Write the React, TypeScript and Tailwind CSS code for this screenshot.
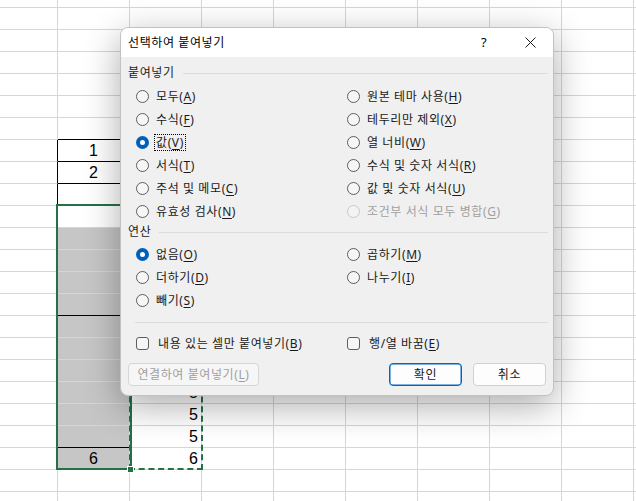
import React from 'react';

type Opt = { t: string; k?: string; checked?: boolean; disabled?: boolean; focused?: boolean };

const pasteLeft: Opt[] = [
  { t: '모두', k: 'A' },
  { t: '수식', k: 'F' },
  { t: '값', k: 'V', checked: true, focused: true },
  { t: '서식', k: 'T' },
  { t: '주석 및 메모', k: 'C' },
  { t: '유효성 검사', k: 'N' },
];

const pasteRight: Opt[] = [
  { t: '원본 테마 사용', k: 'H' },
  { t: '테두리만 제외', k: 'X' },
  { t: '열 너비', k: 'W' },
  { t: '수식 및 숫자 서식', k: 'R' },
  { t: '값 및 숫자 서식', k: 'U' },
  { t: '조건부 서식 모두 병합', k: 'G', disabled: true },
];

const opLeft: Opt[] = [
  { t: '없음', k: 'O', checked: true },
  { t: '더하기', k: 'D' },
  { t: '빼기', k: 'S' },
];

const opRight: Opt[] = [
  { t: '곱하기', k: 'M' },
  { t: '나누기', k: 'I' },
];

const Label: React.FC<{ o: Opt }> = ({ o }) => (
  <span
    className={`px-px leading-[15px] border ${
      o.focused ? 'border-dotted border-black' : 'border-transparent'
    } ${o.disabled ? 'text-[#a0a0a0]' : 'text-[#1a1a1a]'}`}
  >
    {o.t}
    {o.k && (
      <>
        (<span className="underline underline-offset-2">{o.k}</span>)
      </>
    )}
  </span>
);

const Radio: React.FC<{ o: Opt }> = ({ o }) => (
  <div className="flex items-center gap-[5px] h-[23px]">
    {o.checked ? (
      <span className="w-[13px] h-[13px] rounded-full bg-[#005fb8] flex items-center justify-center">
        <span className="w-[5px] h-[5px] rounded-full bg-white" />
      </span>
    ) : (
      <span
        className={`w-[13px] h-[13px] rounded-full border ${
          o.disabled ? 'border-[#c8c8c8] bg-[#f3f3f3]' : 'border-[#5e5e5e] bg-[#f6f6f6]'
        }`}
      />
    )}
    <Label o={o} />
  </div>
);

const Check: React.FC<{ o: Opt }> = ({ o }) => (
  <div className="flex items-center gap-[7px] h-[22px]">
    <span className="w-[13px] h-[13px] rounded-[3px] border border-[#5e5e5e] bg-[#f6f6f6]" />
    <Label o={o} />
  </div>
);

const SectionHead: React.FC<{ title: string }> = ({ title }) => (
  <div className="flex items-center gap-2 h-[18px] pr-[5px]">
    <span className="text-[#1a1a1a]">{title}</span>
    <span className="flex-1 h-px bg-[#dcdcdc]" />
  </div>
);

const Dialog: React.FC = () => (
  <div
    className="absolute left-[120px] top-[27px] w-[434px] h-[369px] rounded-lg border border-[#c2c2c2] bg-[#f0f0f0] overflow-hidden shadow-[0_10px_36px_rgba(0,0,0,0.33)] flex flex-col text-[12px] tracking-[0.6px]"
    style={{ fontFamily: '"Noto Sans", "Noto Sans CJK KR", sans-serif' }}
  >
    {/* title bar */}
    <div className="h-[29px] bg-white flex items-center">
      <span className="pl-[7px] flex-1 text-black">선택하여 붙여넣기</span>
      <span className="w-[46px] text-center text-black text-[13px]">?</span>
      <span className="w-[46px] flex items-center justify-center">
        <svg width="11" height="11" viewBox="0 0 11 11">
          <path d="M0.5 0.5L10.5 10.5M10.5 0.5L0.5 10.5" stroke="#1a1a1a" strokeWidth="1" />
        </svg>
      </span>
    </div>

    {/* body */}
    <div className="flex-1 flex flex-col pl-[7px] pt-[7px]">
      <SectionHead title="붙여넣기" />
      <div className="mt-[3px] ml-[8px] grid grid-cols-[211px_1fr]">
        <div className="flex flex-col">
          {pasteLeft.map((o) => (
            <Radio key={o.t} o={o} />
          ))}
        </div>
        <div className="flex flex-col">
          {pasteRight.map((o) => (
            <Radio key={o.t} o={o} />
          ))}
        </div>
      </div>

      <SectionHead title="연산" />
      <div className="mt-[2px] ml-[8px] grid grid-cols-[211px_1fr]">
        <div className="flex flex-col">
          {opLeft.map((o) => (
            <Radio key={o.t} o={o} />
          ))}
        </div>
        <div className="flex flex-col">
          {opRight.map((o) => (
            <Radio key={o.t} o={o} />
          ))}
        </div>
      </div>

      <div className="mt-[10px] ml-[7px] mr-[5px] h-px bg-[#dcdcdc]" />

      <div className="mt-[9px] ml-[8px] grid grid-cols-[211px_1fr]">
        <Check o={{ t: '내용 있는 셀만 붙여넣기', k: 'B' }} />
        <Check o={{ t: '행/열 바꿈', k: 'E' }} />
      </div>

      <div className="mt-[9px] pr-[7px] flex items-center">
        <button className="w-[131px] h-[23px] rounded-[4px] border border-[#d6d6d6] bg-[#f6f6f6] text-[#a0a0a0]">
          연결하여 붙여넣기(<span className="underline underline-offset-2">L</span>)
        </button>
        <span className="flex-1" />
        <button className="w-[73px] h-[23px] rounded-[4px] border border-[#0067c0] bg-[#fdfdfd] text-[#1a1a1a] shadow-[inset_0_0_0_0.5px_#0067c0]">
          확인
        </button>
        <button className="ml-[11px] w-[73px] h-[23px] rounded-[4px] border border-[#d0d0d0] bg-[#fdfdfd] text-[#1a1a1a]">
          취소
        </button>
      </div>
    </div>
  </div>
);

const ROWS = 24;
const COLS = 10;

const cellText = (r: number, c: number): string => {
  if (c === 1) {
    if (r === 7) return '1';
    if (r === 8) return '2';
    if (r === 21) return '6';
  }
  if (c === 2) {
    if (r >= 18 && r <= 20) return '5';
    if (r === 21) return '6';
  }
  return '';
};

const Cell: React.FC<{ r: number; c: number }> = ({ r, c }) => {
  let cls = 'border-r border-b border-[#d6d6d6] flex items-end leading-[20px] text-[16px] text-black';
  if (c === 0 && r >= 7 && r <= 9) cls += ' border-r-black';
  if (c === 1) {
    cls += ' justify-center';
    if (r >= 6 && r <= 8) cls += ' border-b-black';
    if (r >= 7 && r <= 9) cls += ' border-r-black';
    if (r >= 11 && r <= 21) cls += ' bg-[#c6c6c6]';
    if (r === 14 || r === 20) cls += ' border-b-black';
  }
  if (c === 2) cls += ' justify-end pr-[3px]';
  return <div className={cls}>{cellText(r, c)}</div>;
};

export default function App() {
  const rows = Array.from({ length: ROWS }, (_, r) => r);
  const cols = Array.from({ length: COLS }, (_, c) => c);
  return (
    <div
      className="relative w-[636px] h-[501px] overflow-hidden bg-white"
      style={{ fontFamily: '"Liberation Sans", Arial, sans-serif' }}
    >
      <div className="grid grid-cols-[58px_repeat(9,72px)] grid-rows-[8px_repeat(23,22px)]">
        {rows.map((r) => cols.map((c) => <Cell key={`${r}-${c}`} r={r} c={c} />))}
      </div>

      {/* selection */}
      <div className="absolute left-[56px] top-[204px] w-[76px] h-[266px] border-2 border-[#217346]" />
      {/* copy marquee */}
      <div className="absolute left-[129px] top-[358px] w-[74px] h-[112px] border-2 border-dashed border-[#217346]" />
      {/* fill handle */}
      <div className="absolute left-[127px] top-[466px] w-[7px] h-[7px] bg-[#217346] border border-white" />

      <Dialog />
    </div>
  );
}
